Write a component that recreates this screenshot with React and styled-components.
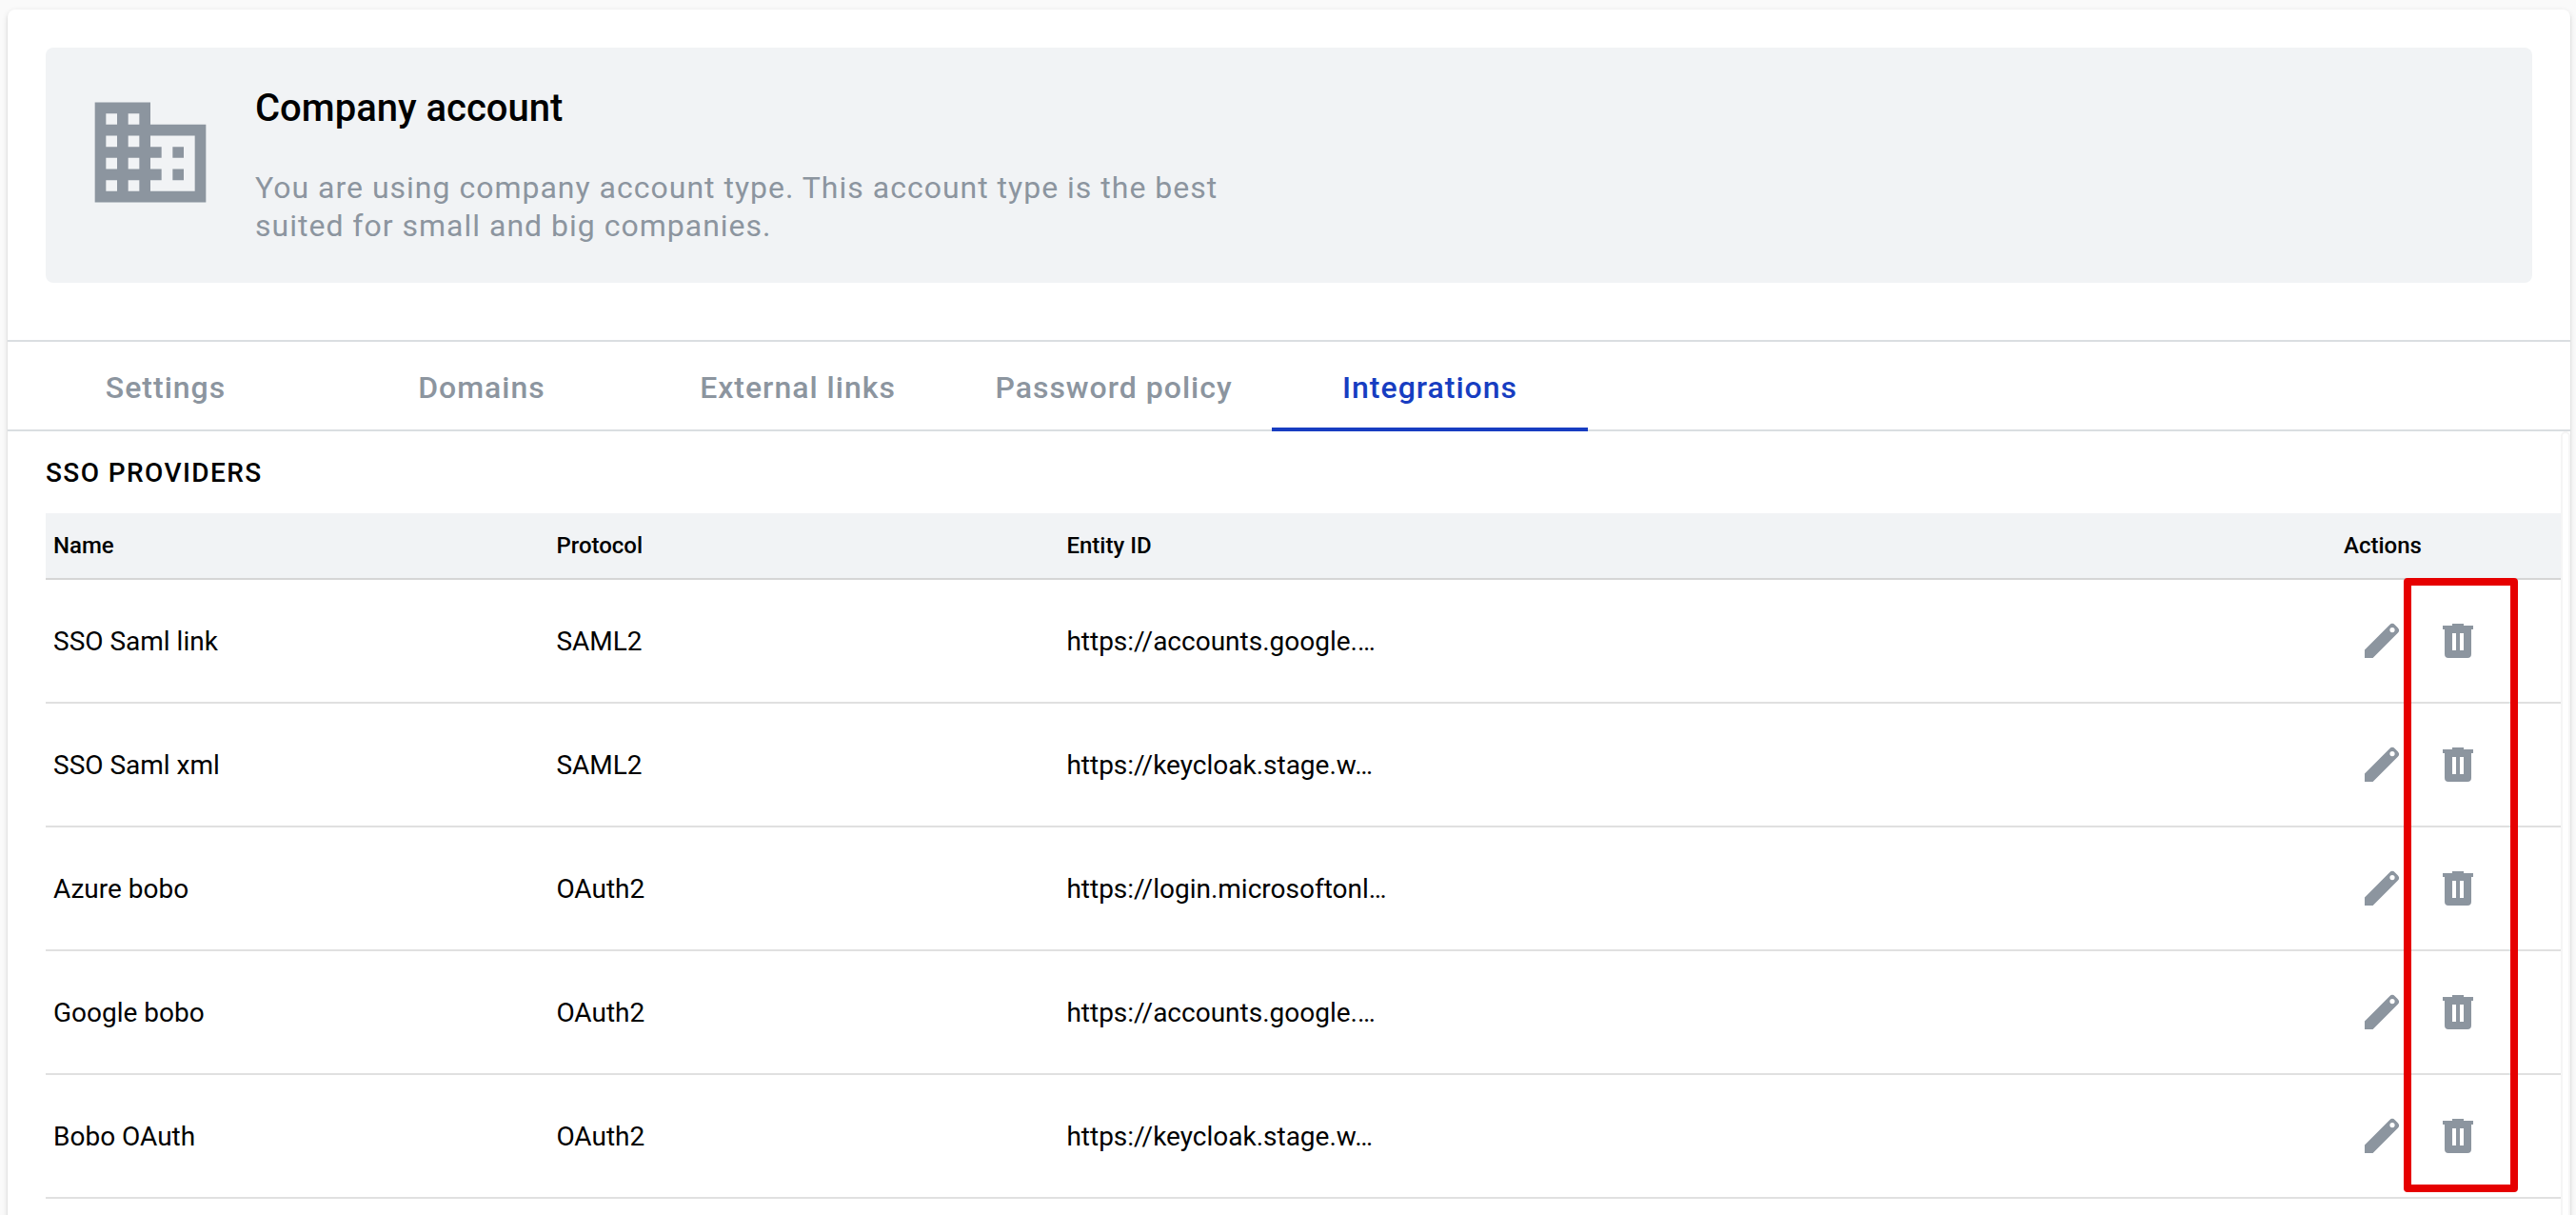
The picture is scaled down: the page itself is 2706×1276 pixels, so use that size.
import React, { useState } from "react";
import styled, { createGlobalStyle } from "styled-components";

const GlobalStyle = createGlobalStyle`
  *, *::before, *::after { box-sizing: border-box; }
  body {
    margin: 0;
    background: #fafafa;
    color: #000;
    font-family: Roboto, "Liberation Sans", sans-serif;
    -webkit-font-smoothing: antialiased;
  }
`;

const Page = styled.div`
  height: 100vh;
  padding: 10px 6px 0 8px;
  overflow: hidden;
`;

const Card = styled.main`
  display: flex;
  flex-direction: column;
  min-height: calc(100% + 40px);
  background: #fff;
  border-radius: 8px;
  box-shadow:
    0 4px 2px -2px rgba(0, 0, 0, 0.2),
    0 2px 2px rgba(0, 0, 0, 0.14),
    0 2px 6px rgba(0, 0, 0, 0.12);
`;

const Hero = styled.section`
  display: flex;
  align-items: flex-start;
  gap: 40px;
  margin: 40px 40px 60px;
  padding: 40px;
  background: #f1f3f5;
  border-radius: 8px;
`;

const HeroText = styled.div`
  max-width: 1040px;
`;

const HeroTitle = styled.h1`
  margin: 0;
  font-size: 40px;
  font-weight: 500;
  line-height: 48px;
`;

const HeroDescription = styled.p`
  margin: 39px 0 0;
  color: #8c959f;
  font-size: 32px;
  letter-spacing: 1px;
  line-height: 40px;
`;

const Tabs = styled.nav`
  display: flex;
  border-top: 2px solid #dadee1;
  box-shadow: inset 0 -2px #dadee1;
`;

const Tab = styled.button`
  width: 332px;
  height: 94px;
  padding: 6px 0 0;
  border: 0;
  border-bottom: 4px solid ${(p) => (p.$active ? "#173dc1" : "transparent")};
  background: none;
  color: ${(p) => (p.$active ? "#173dc1" : "#8c959f")};
  font: 500 32px/40px Roboto, "Liberation Sans", sans-serif;
  letter-spacing: 1px;
  cursor: pointer;
`;

const Panel = styled.section`
  display: flex;
  flex: 1;
`;

const PanelContent = styled.div`
  flex: 1;
  min-width: 0;
  padding: 24px 0 0 40px;
`;

const ScrollTrack = styled.div`
  width: 10px;
  border: 2px solid #f5f5f5;
  border-radius: 5px;
`;

const SectionTitle = styled.h2`
  margin: 0 0 22px;
  font-size: 28px;
  font-weight: 500;
  letter-spacing: 0.05em;
  line-height: 40px;
  text-transform: uppercase;
`;

const TableWrap = styled.div`
  position: relative;
`;

const Table = styled.table`
  width: 100%;
  border-collapse: separate;
  border-spacing: 0;
  table-layout: fixed;
`;

const Col = styled.col`
  width: ${(p) => p.$width};
`;

const HeadCell = styled.th`
  height: 70px;
  padding: 0 8px;
  border-bottom: 2px solid #d5d5d5;
  background: #f1f3f5;
  font-size: 24px;
  font-weight: 500;
  text-align: left;
`;

const Cell = styled.td`
  height: 130px;
  padding: 0 8px;
  border-bottom: 2px solid #e0e0e0;
  font-size: 28px;
`;

const Actions = styled.div`
  display: flex;
  gap: 32px;
  padding-left: 16px;
`;

const IconButton = styled.button`
  display: flex;
  padding: 0;
  border: 0;
  background: none;
  color: #8c959f;
  cursor: pointer;
`;

const Highlight = styled.div`
  position: absolute;
  top: 68px;
  right: 45px;
  bottom: 7px;
  width: 120px;
  border: 8px solid #e60000;
  border-radius: 4px;
  pointer-events: none;
`;

const CompanyIcon = () => (
  <svg width="140" height="140" viewBox="0 0 24 24" fill="#8c959f" aria-hidden="true">
    <path d="M12 7V3H2v18h20V7H12zM6 19H4v-2h2v2zm0-4H4v-2h2v2zm0-4H4V9h2v2zm0-4H4V5h2v2zm4 12H8v-2h2v2zm0-4H8v-2h2v2zm0-4H8V9h2v2zm0-4H8V5h2v2zm10 12h-8v-2h2v-2h-2v-2h2v-2h-2V9h8v10zm-2-8h-2v2h2v-2zm0 4h-2v2h2v-2z" />
  </svg>
);

const PencilIcon = () => (
  <svg width="48" height="48" viewBox="0 0 24 24" fill="currentColor" fillRule="evenodd" aria-hidden="true">
    <path d="M3 16.7V21h4.3L20.4 7.9a2 2 0 0 0 0-2.8l-1.5-1.5a2 2 0 0 0-2.8 0zM17.5 5a1.3 1.3 0 1 1 0 2.6 1.3 1.3 0 0 1 0-2.6z" />
  </svg>
);

const TrashIcon = () => (
  <svg width="48" height="48" viewBox="0 0 24 24" fill="currentColor" fillRule="evenodd" aria-hidden="true">
    <path d="M9 3h6v1h5v2h-1v13a2 2 0 0 1-2 2H7a2 2 0 0 1-2-2V6H4V4h5zM9 8v9h2V8zM13 8v9h2V8z" />
  </svg>
);

const tabs = ["Settings", "Domains", "External links", "Password policy", "Integrations"];

const providers = [
  { name: "SSO Saml link", protocol: "SAML2", entity: "https://accounts.google.…" },
  { name: "SSO Saml xml", protocol: "SAML2", entity: "https://keycloak.stage.w…" },
  { name: "Azure bobo", protocol: "OAuth2", entity: "https://login.microsoftonl…" },
  { name: "Google bobo", protocol: "OAuth2", entity: "https://accounts.google.…" },
  { name: "Bobo OAuth", protocol: "OAuth2", entity: "https://keycloak.stage.w…" },
];

export default function App() {
  const [active, setActive] = useState("Integrations");

  return (
    <Page>
      <GlobalStyle />
      <Card>
        <Hero>
          <CompanyIcon />
          <HeroText>
            <HeroTitle>Company account</HeroTitle>
            <HeroDescription>
              You are using company account type. This account type is the best suited for small and
              big companies.
            </HeroDescription>
          </HeroText>
        </Hero>
        <Tabs>
          {tabs.map((label) => (
            <Tab key={label} type="button" $active={label === active} onClick={() => setActive(label)}>
              {label}
            </Tab>
          ))}
        </Tabs>
        <Panel>
          <PanelContent>
            <SectionTitle>SSO providers</SectionTitle>
            <TableWrap>
              <Table>
                <colgroup>
                  <Col $width="20%" />
                  <Col $width="536px" />
                  <Col />
                  <Col $width="236px" />
                </colgroup>
                <thead>
                  <tr>
                    <HeadCell scope="col">Name</HeadCell>
                    <HeadCell scope="col">Protocol</HeadCell>
                    <HeadCell scope="col">Entity ID</HeadCell>
                    <HeadCell scope="col">Actions</HeadCell>
                  </tr>
                </thead>
                <tbody>
                  {providers.map((provider) => (
                    <tr key={provider.name}>
                      <Cell>{provider.name}</Cell>
                      <Cell>{provider.protocol}</Cell>
                      <Cell>{provider.entity}</Cell>
                      <Cell>
                        <Actions>
                          <IconButton type="button" aria-label={`Edit ${provider.name}`}>
                            <PencilIcon />
                          </IconButton>
                          <IconButton type="button" aria-label={`Delete ${provider.name}`}>
                            <TrashIcon />
                          </IconButton>
                        </Actions>
                      </Cell>
                    </tr>
                  ))}
                </tbody>
              </Table>
              <Highlight />
            </TableWrap>
          </PanelContent>
          <ScrollTrack />
        </Panel>
      </Card>
    </Page>
  );
}
